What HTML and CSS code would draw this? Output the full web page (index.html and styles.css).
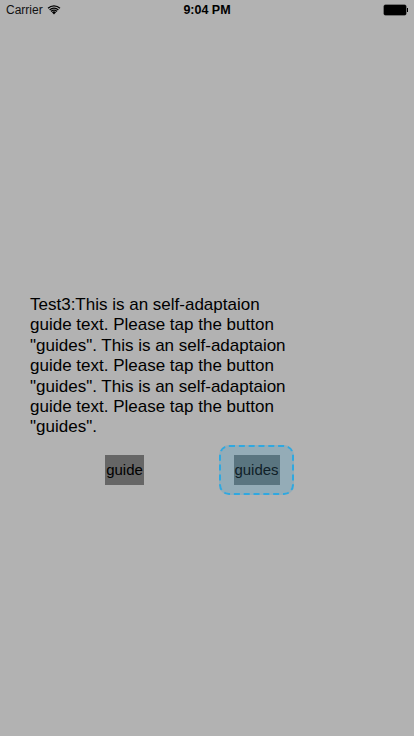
FILE: index.html
```html
<!DOCTYPE html>
<html>
<head>
<meta charset="utf-8">
<link rel="stylesheet" href="styles.css">
</head>
<body>
<div class="screen">
  <div class="status">
    <div class="status-left">
      <span class="carrier">Carrier</span>
      <svg class="wifi" width="14" height="10" viewBox="0 0 14 10">
        <path d="M7 9.6 L4.9 7.3 A3 3 0 0 1 9.1 7.3 Z" fill="#000"/>
        <path d="M3.6 5.9 A4.9 4.9 0 0 1 10.4 5.9 L9.5 6.9 A3.6 3.6 0 0 0 4.5 6.9 Z" fill="#000"/>
        <path d="M2.2 4.4 A7 7 0 0 1 11.8 4.4 L10.9 5.4 A5.7 5.7 0 0 0 3.1 5.4 Z" fill="#000"/>
        <path d="M0.6 2.8 A9.2 9.2 0 0 1 13.4 2.8 L12.5 3.8 A7.9 7.9 0 0 0 1.5 3.8 Z" fill="#000"/>
      </svg>
    </div>
    <div class="time">9:04 PM</div>
    <div class="battery"><span class="batt-body"></span><span class="batt-tip"></span></div>
  </div>
  <div class="content">
    <p class="guide-text">Test3:This is an self-adaptaion guide text. Please tap the button "guides". This is an self-adaptaion guide text. Please tap the button "guides". This is an self-adaptaion guide text. Please tap the button "guides".</p>
    <div class="buttons">
      <div class="btn btn-guide">guide</div>
      <div class="highlight"><div class="btn btn-guides">guides</div></div>
    </div>
  </div>
</div>
</body>
</html>
```
FILE: styles.css
```css
html, body {
  margin: 0;
  padding: 0;
}
body {
  background: #b2b2b2;
  font-family: "Liberation Sans", Arial, sans-serif;
  color: #000;
}
.screen {
  width: 414px;
  height: 736px;
  display: flex;
  flex-direction: column;
}
.status {
  height: 20px;
  display: flex;
  align-items: center;
  justify-content: space-between;
  padding: 0 6px 0 6px;
  position: relative;
  font-size: 12px;
}
.status-left {
  display: flex;
  align-items: center;
  gap: 4px;
}
.carrier {
  color: #111;
}
.wifi {
  margin-top: -1px;
}
.time {
  position: absolute;
  left: 0;
  right: 0;
  text-align: center;
  font-weight: bold;
  font-size: 12.5px;
}
.battery {
  display: flex;
  align-items: center;
}
.batt-body {
  width: 22px;
  height: 10px;
  background: #000;
  border-radius: 1.5px;
  box-shadow: 0 0 0 0.5px #333;
}
.batt-tip {
  width: 1.5px;
  height: 4px;
  background: #000;
  margin-left: 1px;
}
.content {
  padding-top: 275px;
  padding-left: 30px;
  padding-right: 30px;
}
.guide-text {
  margin: 0;
  font-size: 17px;
  line-height: 20.4px;
  width: 270px;
}
.buttons {
  display: flex;
  align-items: center;
  margin-top: 7px;
  padding-left: 75px;
}
.btn {
  height: 30px;
  display: flex;
  align-items: center;
  justify-content: center;
  font-size: 15px;
  box-sizing: border-box;
}
.btn-guide {
  width: 39px;
  background: #666666;
  color: #000;
}
.highlight {
  margin-left: 75px;
  width: 75px;
  height: 50px;
  box-sizing: border-box;
  border: 2px dashed #2fa8e0;
  border-radius: 10px;
  background: #94acb7;
  display: flex;
  align-items: center;
  justify-content: center;
}
.btn-guides {
  width: 46px;
  background: #5a7580;
  color: #0f2027;
}
```
